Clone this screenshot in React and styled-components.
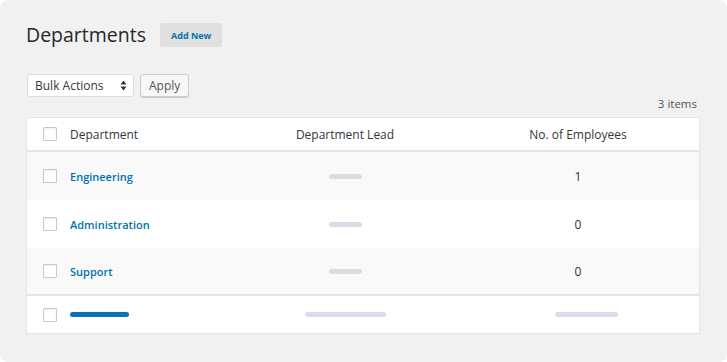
import React from 'react';
import styled, { createGlobalStyle } from 'styled-components';

const GlobalStyle = createGlobalStyle`
  html, body {
    margin: 0;
    padding: 0;
    background: #ffffff;
  }
  * {
    box-sizing: border-box;
  }
`;

const Panel = styled.div`
  width: 727px;
  height: 362px;
  background: #f1f1f1;
  border-radius: 8px;
  padding: 23px 27px 0 26px;
  font-family: "Open Sans", "Liberation Sans", sans-serif;
  color: #32373c;
`;

const TitleRow = styled.div`
  display: flex;
  align-items: center;
  gap: 14px;
`;

const Title = styled.h1`
  margin: 0;
  font-size: 19.5px;
  font-weight: 400;
  color: #23282d;
  line-height: 24px;
`;

const AddButton = styled.button`
  height: 24px;
  padding: 0 11px;
  border: none;
  border-radius: 2px;
  background: #e0e0e0;
  color: #0073aa;
  font-family: inherit;
  font-size: 9px;
  font-weight: 700;
`;

const Toolbar = styled.div`
  display: flex;
  gap: 6px;
  margin-top: 27px;
  padding-left: 1px;
`;

const Select = styled.div`
  width: 107px;
  height: 23px;
  display: flex;
  align-items: center;
  justify-content: space-between;
  padding: 0 6px 0 7px;
  background: #fff;
  border: 1px solid #dcdcdc;
  border-radius: 3px;
  font-size: 12px;
  color: #32373c;
`;

const Arrows = styled.svg`
  width: 7px;
  height: 11px;
`;

const ApplyButton = styled.button`
  height: 23px;
  padding: 0 8px;
  background: #f7f7f7;
  border: 1px solid #cccccc;
  border-radius: 3px;
  box-shadow: 0 1px 0 #cccccc;
  font-family: inherit;
  font-size: 12px;
  color: #555;
`;

const Count = styled.div`
  text-align: right;
  font-size: 11.5px;
  color: #555;
  margin-top: -1px;
  line-height: 16px;
  padding-right: 3px;
`;

const Table = styled.div`
  margin-top: 5px;
  width: 674px;
  background: #fff;
  border: 1px solid #e5e5e5;
`;

const Row = styled.div`
  display: grid;
  grid-template-columns: 43px 163px 224px 1fr;
  align-items: center;
  height: ${p => p.$h || 48}px;
  background: ${p => (p.$alt ? '#f9f9f9' : '#fff')};
  border-bottom: ${p => (p.$line ? '2px solid #e5e5e5' : 'none')};
  font-size: 12px;
`;

const Cell = styled.div`
  display: flex;
  align-items: center;
  justify-content: ${p => (p.$center ? 'center' : 'flex-start')};
  color: ${p => p.$color || '#32373c'};
  font-size: ${p => p.$size || 12}px;
  font-weight: ${p => p.$weight || 400};
`;

const Check = styled.span`
  display: block;
  width: 14px;
  height: 14px;
  margin-left: 16px;
  border: 1px solid #c8c8c8;
  border-radius: 1px;
  background: #fff;
  box-shadow: inset 0 1px 2px rgba(0, 0, 0, 0.07);
`;

const Bar = styled.span`
  display: block;
  width: ${p => p.$w}px;
  height: 5px;
  margin-left: ${p => p.$shift || 0}px;
  border-radius: 3px;
  background: ${p => p.$color};
`;

const rows = [
  { name: 'Engineering', lead: '#dddddd', count: 1, alt: true },
  { name: 'Administration', lead: '#dadbe9', count: 0, alt: false },
  { name: 'Support', lead: '#dddddd', count: 0, alt: true, line: true },
];

export default function App() {
  return (
    <>
      <GlobalStyle />
      <Panel>
        <TitleRow>
          <Title>Departments</Title>
          <AddButton>Add New</AddButton>
        </TitleRow>
        <Toolbar>
          <Select>
            Bulk Actions
            <Arrows viewBox="0 0 7 11">
              <path d="M3.5 0.5 L6.5 4.5 H0.5 Z M3.5 10.5 L6.5 6.5 H0.5 Z" fill="#333" />
            </Arrows>
          </Select>
          <ApplyButton>Apply</ApplyButton>
        </Toolbar>
        <Count>3 items</Count>
        <Table>
          <Row $h={34} $line>
            <Cell><Check /></Cell>
            <Cell>Department</Cell>
            <Cell $center>Department Lead</Cell>
            <Cell $center>No. of Employees</Cell>
          </Row>
          {rows.map(r => (
            <Row key={r.name} $alt={r.alt} $line={r.line}>
              <Cell><Check /></Cell>
              <Cell $color="#0073aa" $weight={600} $size={11}>{r.name}</Cell>
              <Cell $center><Bar $w={33} $color={r.lead} /></Cell>
              <Cell $center $color="#333">{r.count}</Cell>
            </Row>
          ))}
          <Row $h={37}>
            <Cell><Check /></Cell>
            <Cell><Bar $w={59} $color="#0a73b8" /></Cell>
            <Cell $center><Bar $w={81} $color="#dadbec" /></Cell>
            <Cell $center><Bar $w={63} $shift={16} $color="#dadbec" /></Cell>
          </Row>
        </Table>
      </Panel>
    </>
  );
}
